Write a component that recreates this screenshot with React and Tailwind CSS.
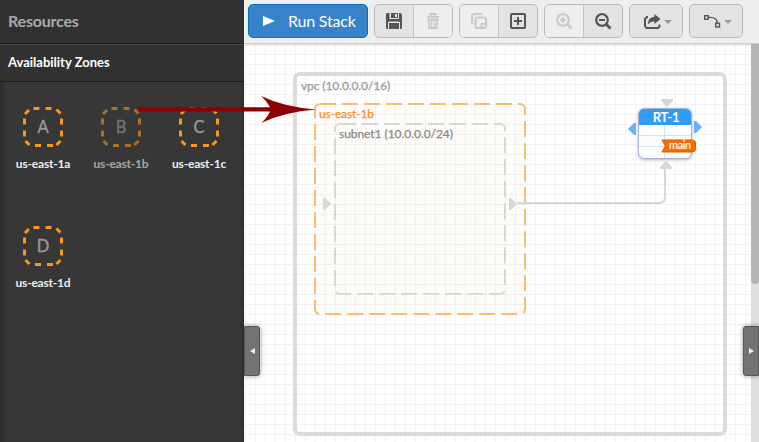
import React from "react";

const LATO = "font-['Lato','Liberation_Sans',sans-serif]";

const ZONES = [
  { letter: "A", name: "us-east-1a" },
  { letter: "B", name: "us-east-1b", used: true },
  { letter: "C", name: "us-east-1c" },
  { letter: "D", name: "us-east-1d" },
];

function Zone({ letter, name, used }) {
  return (
    <div className={`flex h-[119px] w-[78px] flex-col items-center ${used ? "opacity-60" : ""}`}>
      <div className="relative flex h-10 w-10 items-center justify-center">
        <svg className="absolute inset-0" width="40" height="40" fill="none">
          <path
            d="M10.500 1.500H16.500M22.500 1.500H28.500M33.500 2.500L37.500 6.500M38.500 11.500V17.500M38.500 23.500V29.500M37.500 34L33.500 38M30 38.500H24M18 38.500H12M6.500 38L2.500 34M1.500 29.500V23.500M1.500 17.500V11.500M2 7L6 3"
            stroke="#f8981d"
            strokeWidth="3"
          />
        </svg>
        <span className="text-[16.5px] leading-none text-[#999] [-webkit-text-stroke:0.4px_#999]">{letter}</span>
      </div>
      <span className="mt-2.5 text-[12px] leading-[14px] font-bold tracking-[-0.2px] text-[#eee]">{name}</span>
    </div>
  );
}

function Sidebar() {
  return (
    <aside className="h-[442px] w-[244px] shrink-0 bg-[#373737] shadow-[inset_6px_0_6px_-4px_rgba(0,0,0,.25),inset_-3px_0_3px_-2px_rgba(0,0,0,.3)]">
      <h1 className="h-[44px] border-b border-[#1e1e1e] bg-[#313131]/90 pl-2 text-[16px] leading-[42px] font-bold tracking-[-0.2px] text-[#aaa]">
        Resources
      </h1>
      <h2 className="h-[38px] border-t border-b border-t-[#484848] border-b-[#1e1e1e] bg-[#313131]/90 pl-2 text-[13px] leading-[35px] font-bold text-white">
        Availability Zones
      </h2>
      <div className="flex flex-wrap pt-[25px] pl-1">
        {ZONES.map((z) => (
          <Zone key={z.letter} {...z} />
        ))}
      </div>
    </aside>
  );
}

function SaveIcon() {
  return (
    <svg width="18" height="18" viewBox="0 0 18 18">
      <path fill="#555" d="M2.500 1H4.500V7H14V1H15.500L17 2.500V15.500Q17 17 15.500 17H15V10.500L14 9.500H4L3 10.500V17H2.500Q1 17 1 15.500V2.500Q1 1 2.500 1Z" />
      <path fill="#555" fillRule="evenodd" d="M6 1H13V6H6ZM10 2V5H12V2Z" />
      <path fill="#555" d="M4 11H14V17H4Z" />
    </svg>
  );
}

function TrashIcon() {
  return (
    <svg width="18" height="18" viewBox="0 0 18 18" fill="none" stroke="#c9c9c9" strokeWidth="1.800">
      <path d="M3 4.800H15M3.500 7.500H14.500M6.500 4V2H11.500V4M4.800 7.500L5.300 16H12.700L13.200 7.500" />
      <path d="M7.500 8V15M10.500 8V15" strokeWidth="1.400" />
    </svg>
  );
}

function CopyIcon() {
  return (
    <svg width="18" height="18" viewBox="0 0 18 18" fill="none" stroke="#c9c9c9">
      <path strokeWidth="2" d="M2 12V4Q2 2 4 2H12.500" />
      <rect x="5.500" y="5.500" width="10.500" height="10.500" rx="2" strokeWidth="2.200" />
      <path d="M11.500 16V11.800H16" strokeWidth="1.800" />
    </svg>
  );
}

function AddIcon() {
  return (
    <svg width="18" height="18" viewBox="0 0 18 18" fill="none" stroke="#555" strokeWidth="2">
      <rect x="2" y="2" width="14" height="14" rx="1" />
      <path d="M9 5V13M5 9H13" />
    </svg>
  );
}

function LensIcon({ plus }) {
  return (
    <svg width="18" height="18" viewBox="0 0 18 18" fill="none" stroke={plus ? "#cbcbcb" : "#555"}>
      <circle cx="8" cy="8" r="5.800" strokeWidth="2.200" />
      <path d="M12 12L16.500 16.500" strokeWidth="2.800" />
      <path d={plus ? "M8 5V11M5 8H11" : "M5 8H11"} strokeWidth="2" />
    </svg>
  );
}

function ShareIcon() {
  return (
    <svg width="18" height="18" viewBox="0 0 18 18">
      <path d="M5 5H4L2 7V14L3.500 16H15L16.500 14.500V12.500" fill="none" stroke="#555" strokeWidth="2" />
      <path d="M11.500 2L17.500 7L11.500 12V9.500Q7.500 8.800 5 12.500Q4.500 5.500 11.500 4.800Z" fill="#555" />
    </svg>
  );
}

function LineIcon() {
  return (
    <svg width="18" height="18" viewBox="0 0 18 18" fill="none" stroke="#555" strokeWidth="1.400">
      <rect x="1.700" y="3.700" width="3.500" height="3.500" />
      <rect x="12.700" y="11.200" width="3.800" height="3.800" />
      <path d="M5.500 5.500C11 5 14 7 14.500 11" />
    </svg>
  );
}

function Group({ children }) {
  return (
    <div className="flex h-[34px] w-[79px] overflow-hidden rounded-[5px] border border-[#b9b9b9] bg-[#e3e3e3]">
      {children}
    </div>
  );
}

function Btn({ off, last, children }) {
  return (
    <div
      className={`flex items-center justify-center ${off ? "bg-[#eee]" : ""} ${last ? "flex-1" : "w-[39px] border-r border-[#c4c4c4]"}`}
    >
      {children}
    </div>
  );
}

function MenuBtn({ children }) {
  return (
    <div className="flex h-[34px] w-[54px] items-center justify-center gap-[3px] rounded-[5px] border border-[#b9b9b9] bg-[#e3e3e3] pl-[3px]">
      {children}
      <span className="mt-0.5 border-x-4 border-t-4 border-x-transparent border-t-[#999]" />
    </div>
  );
}

function Toolbar() {
  return (
    <header className="flex h-[44px] gap-1.5 border-b border-[#cfcfcf] bg-[#eee] pt-1 pl-1">
      <div className="flex h-[34px] w-[120px] items-center rounded-[5px] border border-[#0b72bd] bg-[#3782c8] pl-[14px] text-[16px] text-white">
        <svg width="12" height="12" viewBox="0 0 12 12">
          <path d="M0 1L12 6L0 11Z" fill="#fff" />
        </svg>
        <span className="ml-[13px] leading-none tracking-[-0.2px] whitespace-nowrap">Run Stack</span>
      </div>
      <Group>
        <Btn><SaveIcon /></Btn>
        <Btn off last><TrashIcon /></Btn>
      </Group>
      <Group>
        <Btn off><CopyIcon /></Btn>
        <Btn last><AddIcon /></Btn>
      </Group>
      <Group>
        <Btn off><LensIcon plus /></Btn>
        <Btn last><LensIcon /></Btn>
      </Group>
      <MenuBtn><ShareIcon /></MenuBtn>
      <MenuBtn><LineIcon /></MenuBtn>
    </header>
  );
}

function RouteTable() {
  return (
    <div className="absolute top-[64px] left-[394px] h-[51px] w-[54px] rounded-[6px] border border-[#a9b4cc] bg-[#fbfcfc] shadow-[0_1px_3px_rgba(90,110,150,.5)]">
      <div className="h-4 rounded-t-[5px] bg-[#2f9df4] pl-0.5 text-center text-[13px] leading-[16px] font-bold tracking-[-0.2px] text-white">RT-1</div>
      <div className="grid h-[33px] grid-cols-2 grid-rows-3 overflow-hidden rounded-b-[5px]">
        {[0, 1, 2, 3, 4, 5].map((i) => (
          <span key={i} className={`border-[#dfe1e3] ${i % 2 ? "" : "border-r"} ${i < 4 ? "border-b" : ""}`} />
        ))}
      </div>
      <svg className="absolute top-[30px] left-[22px]" width="36" height="15">
        <path d="M1 1H31Q34.500 1 34.500 4V10Q34.500 13 31 13H1L4.500 7Z" fill="#fd6c03" stroke="#d95800" />
      </svg>
      <span className="absolute top-[29px] left-[30px] text-[11px] leading-[13px] tracking-[-0.35px] text-white [-webkit-text-stroke:0.2px_#fff]">main</span>
    </div>
  );
}

function Canvas() {
  return (
    <main className="relative h-[398px] w-[515px] overflow-hidden bg-white">
      <svg className="absolute inset-0" width="515" height="398" viewBox="244 44 515 398" fill="none">
        <defs>
          <pattern id="grid" x="245" y="44" width="10" height="10" patternUnits="userSpaceOnUse">
            <path d="M0 .5H10M.5 0V10" stroke="#f2f2f2" />
          </pattern>
        </defs>
        <rect x="244" y="44" width="515" height="398" fill="url(#grid)" />
        <rect x="295" y="74" width="430" height="360" rx="5" stroke="#dbdbdb" strokeWidth="4" />
        <rect x="315" y="104" width="210" height="210" rx="5" fill="#e0b050" fillOpacity=".035" stroke="#f8be70" strokeWidth="2" strokeDasharray="16 6" />
        <rect x="335" y="124" width="170" height="170" rx="5" stroke="#d7d7d5" strokeWidth="2" strokeDasharray="16 6" />
        <path d="M517 203H659Q665 203 665 197V168" stroke="#d7d7d5" strokeWidth="2" />
        <g fill="#d7d7d5">
          <path d="M323 198H325L331 204L325 210H323Z" />
          <path d="M509 198H511L517 204L511 210H509Z" />
          <path d="M661 99H673V101L667 107L661 101Z" />
          <path d="M660 169V167L666 161L672 167V169Z" />
        </g>
        <g fill="#6badff">
          <path d="M636 123V135H634L628 129L634 123Z" />
          <path d="M694 121V133H696L702 127L696 121Z" />
        </g>
      </svg>
      <div className="absolute inset-x-0 top-0 h-[3px] bg-linear-to-b from-black/10 to-transparent" />
      <span className="absolute top-[34px] left-[57px] text-[12px] leading-[16px] tracking-[-0.1px] whitespace-nowrap text-[#999] [-webkit-text-stroke:0.25px_#999]">vpc (10.0.0.0/16)</span>
      <span className="absolute top-[62px] left-[75px] text-[12px] leading-[16px] tracking-[-0.15px] whitespace-nowrap text-[#f8902e] [-webkit-text-stroke:0.25px_#f8902e]">us-east-1b</span>
      <span className="absolute top-[82px] left-[95px] text-[12px] leading-[16px] tracking-[-0.05px] whitespace-nowrap text-[#888] [-webkit-text-stroke:0.25px_#888]">subnet1 (10.0.0.0/24)</span>
      <RouteTable />
      <div className="absolute top-0 right-0 h-full w-2 bg-[#dedede]">
        <div className="h-[240px] rounded-b-[4px] bg-[#b3b3b3]" />
      </div>
      <div className="absolute top-[282px] left-0 flex h-[50px] w-4 items-center justify-center rounded-r-[3px] border border-[#555] bg-[#737373] shadow-[0_0_5px_rgba(0,0,0,.4)]">
        <span className="border-y-[3.5px] border-r-[5px] border-y-transparent border-r-[#eee]" />
      </div>
      <div className="absolute top-[282px] right-0 flex h-[50px] w-4 items-center justify-center rounded-l-[3px] border border-[#555] bg-[#737373] shadow-[0_0_5px_rgba(0,0,0,.4)]">
        <span className="border-y-[3.5px] border-l-[5px] border-y-transparent border-l-[#eee]" />
      </div>
    </main>
  );
}

export default function App() {
  return (
    <div className={`relative flex h-[442px] w-[759px] overflow-hidden ${LATO}`}>
      <Sidebar />
      <div className="flex w-[515px] flex-col">
        <Toolbar />
        <Canvas />
      </div>
      <svg className="pointer-events-none absolute top-[94px] left-[138px]" width="180" height="32" viewBox="138 94 180 32">
        <path d="M138 107.200H270Q267 101 261 96Q284 107 316 109.500Q284 112 261 123Q267 118 270 111.400H138Z" fill="#900000" />
      </svg>
    </div>
  );
}
